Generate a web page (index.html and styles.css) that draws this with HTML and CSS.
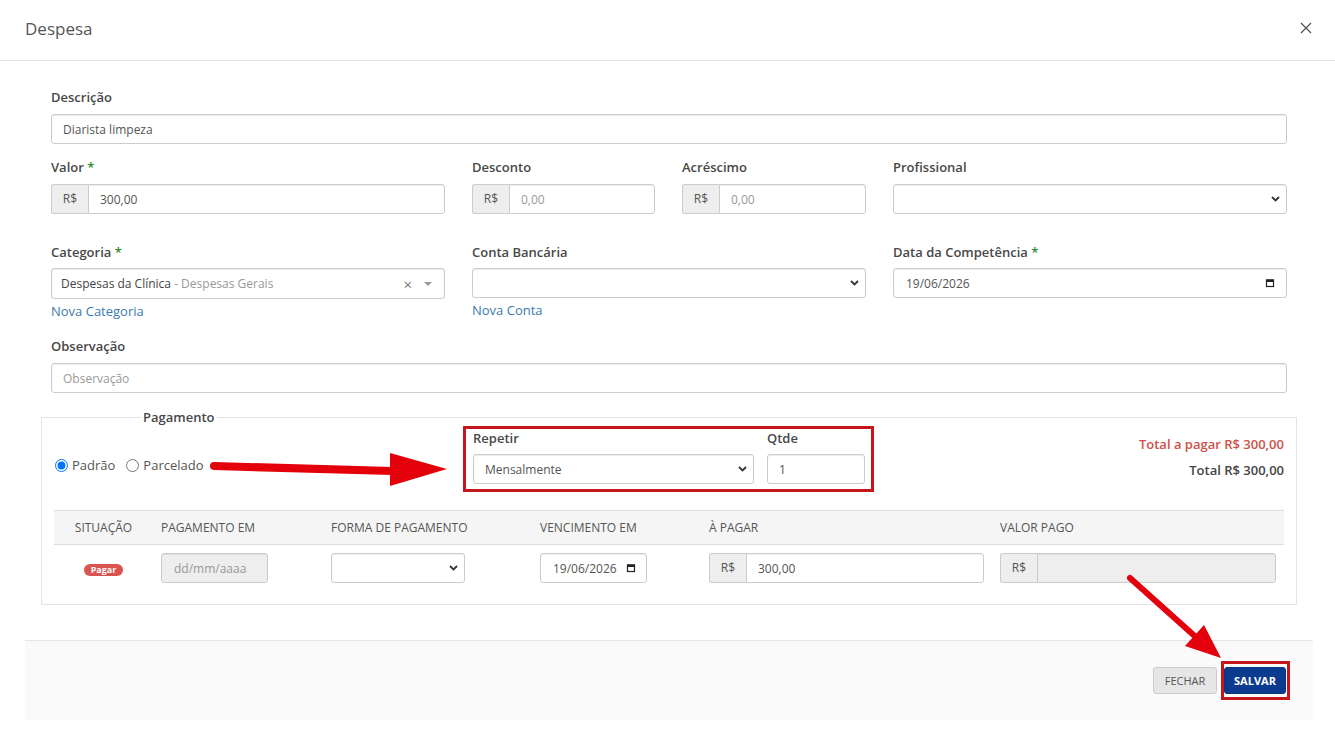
FILE: index.html
```html
<!DOCTYPE html>
<html lang="pt-BR">
<head>
    <meta charset="UTF-8">
    <meta name="viewport" content="width=device-width, initial-scale=1.0">
    <title>Despesa</title>
    <link rel="stylesheet" href="styles.css">
</head>
<body>
<div class="modal">
    <div class="modal-header">
        <h4 class="modal-title">Despesa</h4>
        <button class="close" type="button" aria-label="Fechar">
            <svg width="12" height="12" viewBox="0 0 12 12"><path d="M1 1L11 11M11 1L1 11" stroke="#555" stroke-width="1.3" fill="none"/></svg>
        </button>
    </div>

    <div class="modal-body">
        <div class="form-group grupo-descricao">
            <label>Descrição</label>
            <input class="form-control" type="text" value="Diarista limpeza">
        </div>

        <div class="row row-valores">
            <div class="form-group">
                <label>Valor <span class="req">*</span></label>
                <div class="input-group">
                    <span class="addon">R$</span>
                    <input class="form-control" type="text" value="300,00">
                </div>
            </div>
            <div class="form-group">
                <label>Desconto</label>
                <div class="input-group">
                    <span class="addon">R$</span>
                    <input class="form-control" type="text" placeholder="0,00">
                </div>
            </div>
            <div class="form-group">
                <label>Acréscimo</label>
                <div class="input-group">
                    <span class="addon">R$</span>
                    <input class="form-control" type="text" placeholder="0,00">
                </div>
            </div>
            <div class="form-group">
                <label>Profissional</label>
                <div class="select-wrap">
                    <select class="form-control"><option></option></select>
                    <svg class="chevron" width="9" height="6" viewBox="0 0 9 6"><path d="M1 1L4.5 4.5L8 1" stroke="#333" stroke-width="1.8" fill="none"/></svg>
                </div>
            </div>
        </div>

        <div class="row row-categoria">
            <div class="form-group">
                <label>Categoria <span class="req">*</span></label>
                <div class="form-control select2">
                    <span class="select2-text">Despesas da Clínica <span class="sub">- Despesas Gerais</span></span>
                    <span class="select2-clear">×</span>
                    <span class="select2-caret"></span>
                </div>
                <a class="link" href="#">Nova Categoria</a>
            </div>
            <div class="form-group">
                <label>Conta Bancária</label>
                <div class="select-wrap">
                    <select class="form-control"><option></option></select>
                    <svg class="chevron" width="9" height="6" viewBox="0 0 9 6"><path d="M1 1L4.5 4.5L8 1" stroke="#333" stroke-width="1.8" fill="none"/></svg>
                </div>
                <a class="link" href="#">Nova Conta</a>
            </div>
            <div class="form-group">
                <label>Data da Competência <span class="req">*</span></label>
                <div class="form-control date date-full">
                    <span>19/06/2026</span>
                    <svg class="cal" width="10" height="10" viewBox="0 0 10 10"><rect x="1.5" y="2" width="7" height="6.5" fill="none" stroke="#222" stroke-width="1.2"/><rect x="1" y="1.5" width="8" height="2.5" fill="#222"/></svg>
                </div>
            </div>
        </div>

        <div class="form-group">
            <label>Observação</label>
            <input class="form-control" type="text" placeholder="Observação">
        </div>

        <fieldset class="pagamento">
            <legend>Pagamento</legend>
            <div class="pagamento-top">
                <div class="tipo">
                    <label class="radio"><input type="radio" name="tipo" checked> Padrão</label>
                    <label class="radio"><input type="radio" name="tipo"> Parcelado</label>
                </div>
                <div class="repetir destaque">
                    <div>
                        <label>Repetir</label>
                        <div class="select-wrap">
                            <select class="form-control"><option>Mensalmente</option></select>
                            <svg class="chevron" width="9" height="6" viewBox="0 0 9 6"><path d="M1 1L4.5 4.5L8 1" stroke="#333" stroke-width="1.8" fill="none"/></svg>
                        </div>
                    </div>
                    <div>
                        <label>Qtde</label>
                        <input class="form-control" type="text" value="1">
                    </div>
                </div>
                <div class="totais">
                    <div class="total-pagar">Total a pagar R$ 300,00</div>
                    <div class="total">Total R$ 300,00</div>
                </div>
            </div>

            <table class="parcelas">
                <colgroup>
                    <col style="width: 99px">
                    <col style="width: 170px">
                    <col style="width: 209px">
                    <col style="width: 169px">
                    <col style="width: 291px">
                    <col>
                </colgroup>
                <thead>
                    <tr>
                        <th class="center">Situação</th>
                        <th>Pagamento em</th>
                        <th>Forma de pagamento</th>
                        <th>Vencimento em</th>
                        <th>À pagar</th>
                        <th>Valor pago</th>
                    </tr>
                </thead>
                <tbody>
                    <tr>
                        <td class="center"><span class="badge">Pagar</span></td>
                        <td><div class="form-control date disabled small-date">dd/mm/aaaa</div></td>
                        <td>
                            <div class="select-wrap small-select">
                                <select class="form-control"><option></option></select>
                                <svg class="chevron" width="9" height="6" viewBox="0 0 9 6"><path d="M1 1L4.5 4.5L8 1" stroke="#333" stroke-width="1.8" fill="none"/></svg>
                            </div>
                        </td>
                        <td>
                            <div class="form-control date small-date">
                                <span>19/06/2026</span>
                                <svg class="cal" width="10" height="10" viewBox="0 0 10 10"><rect x="1.5" y="2" width="7" height="6.5" fill="none" stroke="#222" stroke-width="1.2"/><rect x="1" y="1.5" width="8" height="2.5" fill="#222"/></svg>
                            </div>
                        </td>
                        <td>
                            <div class="input-group">
                                <span class="addon">R$</span>
                                <input class="form-control" type="text" value="300,00">
                            </div>
                        </td>
                        <td>
                            <div class="input-group">
                                <span class="addon">R$</span>
                                <input class="form-control" type="text" disabled>
                            </div>
                        </td>
                    </tr>
                </tbody>
            </table>
        </fieldset>
    </div>

    <div class="modal-footer">
        <button class="btn btn-default" type="button">Fechar</button>
        <span class="destaque destaque-btn"><button class="btn btn-primary" type="button">Salvar</button></span>
    </div>

    <!-- setas de destaque do print -->
    <svg class="seta seta-repetir" width="250" height="45" viewBox="0 0 250 45">
        <path d="M9 18L187 23" stroke="#e3000b" stroke-width="8" stroke-linecap="round" fill="none"/>
        <polygon points="185,5 242,21 185,38" fill="#e3000b"/>
    </svg>
    <svg class="seta seta-salvar" width="110" height="95" viewBox="0 0 110 95">
        <path d="M10 8L78 69" stroke="#e3000b" stroke-width="6" stroke-linecap="round" fill="none"/>
        <polygon points="101,88 65,76 84,55" fill="#e3000b"/>
    </svg>
</div>
</body>
</html>
```

FILE: styles.css
```css
body {
    margin: 0;
    background: #fff;
    font-family: "Open Sans", "Liberation Sans", sans-serif;
    font-size: 13px;
    color: #555;
}
.modal {
    position: relative;
    width: 1335px;
    min-height: 733px;
}
.modal-header {
    height: 61px;
    border-bottom: 1px solid #e5e5e5;
    display: flex;
    align-items: center;
    justify-content: space-between;
    padding: 0 23px 4px 25px;
    box-sizing: border-box;
}
.modal-title {
    margin: 0;
    font-size: 17px;
    font-weight: 400;
    color: #555;
}
.close {
    border: none;
    background: none;
    padding: 0;
    cursor: pointer;
    display: flex;
}
.modal-body {
    padding: 27px 48px 0 51px;
}
label {
    display: block;
    font-weight: 600;
    color: #484848;
    line-height: 18px;
    margin-bottom: 8px;
}
.req {
    color: #2e8b2e;
}
.form-control {
    display: block;
    width: 100%;
    height: 30px;
    box-sizing: border-box;
    border: 1px solid #ccc;
    border-radius: 3px;
    padding: 0 11px;
    font-family: "Open Sans", "Liberation Sans", sans-serif;
    font-size: 12px;
    color: #555;
    background: #fff;
    box-shadow: inset 0 1px 1px rgba(0, 0, 0, 0.075);
}
.form-control::placeholder {
    color: #999;
}
.grupo-descricao {
    margin-bottom: 14px;
}
.row {
    display: grid;
    column-gap: 27px;
}
.row-valores {
    grid-template-columns: 394px 183px 184px 394px;
    margin-bottom: 29px;
}
.row-categoria {
    grid-template-columns: 394px 394px 394px;
    margin-bottom: 17px;
}
.row-categoria label {
    margin-bottom: 7px;
}
.input-group {
    display: flex;
}
.addon {
    width: 37px;
    flex: none;
    height: 30px;
    box-sizing: border-box;
    border: 1px solid #ccc;
    border-right: none;
    border-radius: 3px 0 0 3px;
    background: #eee;
    font-size: 12px;
    line-height: 28px;
    text-align: center;
    color: #555;
}
.input-group .form-control {
    border-radius: 0 3px 3px 0;
}
.select-wrap {
    position: relative;
}
.select-wrap select {
    appearance: none;
    -webkit-appearance: none;
}
.chevron {
    position: absolute;
    right: 7px;
    top: 12px;
    pointer-events: none;
}
.select2 {
    display: flex;
    align-items: center;
    height: 31px;
    padding: 0 10px 0 9px;
}
.select2-text {
    flex: 1;
    color: #444;
}
.select2-text .sub {
    color: #999;
}
.select2-clear {
    color: #777;
    font-size: 15px;
    margin-right: 12px;
}
.select2-caret {
    width: 0;
    height: 0;
    border-left: 4px solid transparent;
    border-right: 4px solid transparent;
    border-top: 4px solid #999;
    margin-right: 2px;
}
.link {
    display: block;
    margin-top: 3px;
    line-height: 18px;
    color: #3a7ab0;
    text-decoration: none;
}
.date {
    display: flex;
    align-items: center;
    justify-content: space-between;
}
.date-full {
    padding: 0 11px 0 12px;
}
.small-date {
    width: 107px;
    padding: 0 10px 0 12px;
}
.disabled {
    background: #eee;
    color: #999;
}
.small-select {
    width: 134px;
}
.pagamento {
    margin: 15px -10px 0;
    border: 1px solid #e5e5e5;
    padding: 0 12px 13px 12px;
}
.pagamento legend {
    font-weight: 600;
    color: #484848;
    line-height: 18px;
    padding: 0 2px;
    margin-left: 87px;
}
.pagamento-top {
    display: grid;
    grid-template-columns: 409px 411px 1fr;
}
.tipo {
    display: flex;
    align-items: flex-start;
    padding-top: 30px;
}
.radio {
    display: flex;
    align-items: center;
    height: 18px;
    font-weight: 400;
    color: #555;
    margin: 0 10px 0 0;
}
.radio input {
    width: 13px;
    height: 13px;
    margin: 0 4px 0 1px;
}
.destaque {
    border: 3px solid #c4161c;
}
.repetir {
    display: grid;
    grid-template-columns: 281px 98px;
    column-gap: 13px;
    padding: 0 6px 5px 7px;
}
.repetir label {
    margin-bottom: 7px;
}
.totais {
    text-align: right;
    padding-top: 9px;
    font-weight: 600;
    line-height: 18px;
}
.total-pagar {
    color: #d0504a;
    margin-bottom: 8px;
}
.total {
    color: #444;
}
.parcelas {
    width: 100%;
    margin-top: 18px;
    border-collapse: collapse;
    table-layout: fixed;
}
.parcelas th {
    height: 33px;
    background: #f5f5f5;
    border-top: 1px solid #ddd;
    border-bottom: 1px solid #ddd;
    padding: 0 8px;
    font-size: 12px;
    font-weight: 400;
    text-align: left;
    text-transform: uppercase;
    color: #555;
}
.parcelas td {
    padding: 8px;
    vertical-align: middle;
}
.parcelas .center {
    text-align: center;
}
.badge {
    display: inline-block;
    background: #d9534f;
    color: #fff;
    font-size: 9px;
    font-weight: 700;
    line-height: 12px;
    padding: 0 7px;
    border-radius: 8px;
}
.parcelas input:disabled {
    background: #eee;
}
.modal-footer {
    margin: 35px 22px 0 25px;
    height: 80px;
    box-sizing: border-box;
    border-top: 1px solid #e5e5e5;
    background: #fafafa;
    display: flex;
    justify-content: flex-end;
    align-items: center;
    padding-right: 23px;
    gap: 4px;
}
.btn {
    height: 27px;
    border-radius: 3px;
    font-family: "Open Sans", "Liberation Sans", sans-serif;
    font-size: 11px;
    text-transform: uppercase;
    cursor: pointer;
}
.btn-default {
    width: 64px;
    background: #e6e6e6;
    border: 1px solid #ccc;
    color: #555;
}
.destaque-btn {
    display: flex;
    padding: 3px 1px 3px 0;
}
.btn-primary {
    width: 62px;
    background: #0b3b8e;
    border: 1px solid #0a3580;
    color: #fff;
    font-weight: 700;
}
.seta {
    position: absolute;
}
.seta-repetir {
    left: 205px;
    top: 448px;
}
.seta-salvar {
    left: 1120px;
    top: 570px;
}
```
